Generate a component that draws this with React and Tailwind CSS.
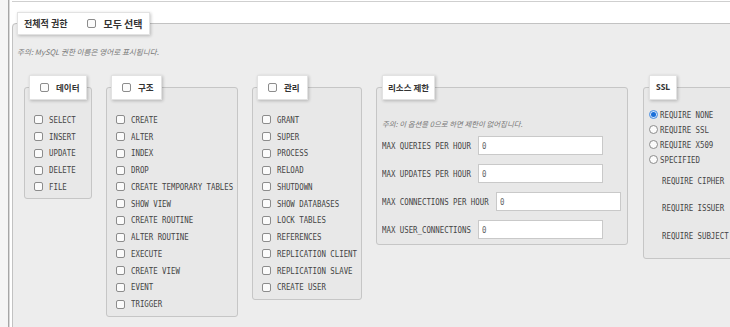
import React from "react";

const dataPrivs = ["SELECT", "INSERT", "UPDATE", "DELETE", "FILE"];
const structPrivs = [
    "CREATE", "ALTER", "INDEX", "DROP", "CREATE TEMPORARY TABLES", "SHOW VIEW",
    "CREATE ROUTINE", "ALTER ROUTINE", "EXECUTE", "CREATE VIEW", "EVENT", "TRIGGER",
];
const adminPrivs = [
    "GRANT", "SUPER", "PROCESS", "RELOAD", "SHUTDOWN", "SHOW DATABASES",
    "LOCK TABLES", "REFERENCES", "REPLICATION CLIENT", "REPLICATION SLAVE", "CREATE USER",
];
const limits = [
    { label: "MAX QUERIES PER HOUR", w: "w-[96px]" },
    { label: "MAX UPDATES PER HOUR", w: "w-[96px]" },
    { label: "MAX CONNECTIONS PER HOUR", w: "w-[114px]" },
    { label: "MAX USER_CONNECTIONS", w: "w-[96px]" },
];

function Box() {
    return <span className="block h-[9px] w-[9px] shrink-0 rounded-[2px] border border-[#8c8c8c] bg-[#fbfbfb]"></span>;
}

function Mono({ children }) {
    return (
        <span className="block origin-left scale-x-[0.82] whitespace-nowrap font-['DejaVu_Sans_Mono',monospace] text-[9px] leading-[10px] text-[#444]">
            {children}
        </span>
    );
}

function Item({ label }) {
    return (
        <div className="flex h-[16.75px] min-w-0 items-center pl-[5px]">
            <Box/>
            <div className="ml-[6px] min-w-0 leading-none"><Mono>{label}</Mono></div>
        </div>
    );
}

function Legend({ children, className = "" }) {
    return (
        <legend className="border border-[#e2e2e2] bg-white shadow-[1px_1px_3px_rgba(0,0,0,0.22)]">
            <div className={`flex h-[23px] items-center whitespace-nowrap font-['Noto_Sans_CJK_KR',sans-serif] text-[8.5px] font-bold leading-none text-[#333] ${className}`}>
                {children}
            </div>
        </legend>
    );
}

function PrivGroup({ title, items, width }) {
    return (
        <fieldset className={`${width} min-w-0 shrink-0 rounded-[3px] border border-[#c6c6c6] bg-[#e8e8e8] px-[4px] pb-[3px]`}>
            <Legend className="pl-[10px] pr-[7px]">
                <Box/>
                <span className="ml-[7px]">{title}</span>
            </Legend>
            <div className="pt-[11.5px]">
                {items.map((p) => <Item key={p} label={p}/>)}
            </div>
        </fieldset>
    );
}

function Radio({ checked }) {
    return checked ? (
        <span className="flex h-[9px] w-[9px] shrink-0 items-center justify-center rounded-full border border-[#4a8fe0] bg-[#cfe2fb]">
            <span className="h-[5px] w-[5px] rounded-full bg-[#1a6fd8]"></span>
        </span>
    ) : (
        <span className="block h-[9px] w-[9px] shrink-0 rounded-full border border-[#8c8c8c] bg-[#fbfbfb]"></span>
    );
}

export default function App() {
    return (
        <div className="flex h-[327px] w-[730px] overflow-hidden bg-white">
            <div className="w-[9px] shrink-0 border-r border-[#a6a6a6] bg-[#f5f5f5]"></div>
            <div className="shrink-0 border-l border-[#d8d8d8] pl-[2px]">
                <div className="mt-[1px] border-t border-[#cfcfcf]"></div>
                <fieldset className="mt-[10px] w-[760px] min-w-0 rounded-[4px] border border-[#c2c2c2] bg-[#ededed] pb-[30px] pl-[4px]">
                    <legend className="border border-[#e2e2e2] bg-white shadow-[1px_1px_3px_rgba(0,0,0,0.22)]">
                        <div className="flex h-[21px] items-center whitespace-nowrap pl-[6px] pr-[6px] font-['Noto_Sans_CJK_KR',sans-serif] font-bold leading-none text-[#333]">
                            <span className="text-[9px]">전체적 권한</span>
                            <span className="ml-[20px]"><Box/></span>
                            <span className="ml-[7px] text-[10px]">모두 선택</span>
                        </div>
                    </legend>
                    <p className="mt-[12px] h-[10px] font-['Noto_Sans_CJK_KR',sans-serif] text-[7.6px] italic leading-[10px] text-[#777]">
                        주의: MySQL 권한 이름은 영어로 표시됩니다.
                    </p>
                    <div className="ml-[7px] mt-[18px] flex items-start gap-[14px]">
                        <PrivGroup title="데이터" items={dataPrivs} width="w-[68px]"/>
                        <PrivGroup title="구조" items={structPrivs} width="w-[132px]"/>
                        <PrivGroup title="관리" items={adminPrivs} width="w-[110px]"/>

                        <fieldset className="w-[252px] min-w-0 shrink-0 rounded-[3px] border border-[#c6c6c6] bg-[#e8e8e8] px-[5px] pb-[5px]">
                            <Legend className="px-[5px]">
                                <span>리소스 제한</span>
                            </Legend>
                            <p className="mt-[19px] h-[10px] whitespace-nowrap font-['Noto_Sans_CJK_KR',sans-serif] text-[7.4px] italic leading-[10px] text-[#777]">
                                주의: 이 옵션을 0으로 하면 제한이 없어집니다.
                            </p>
                            <div className="mt-[7px] flex flex-col gap-[9px]">
                                {limits.map((l) => (
                                    <div key={l.label} className="flex h-[19px] items-center">
                                        <div className={`${l.w} shrink-0`}><Mono>{l.label}</Mono></div>
                                        <div className="flex h-[19px] w-[125px] items-center border border-[#c9c9c9] bg-white pl-[3px]">
                                            <Mono><span className="text-[#666]">0</span></Mono>
                                        </div>
                                    </div>
                                ))}
                            </div>
                        </fieldset>

                        <fieldset className="ml-[1px] w-[100px] min-w-0 shrink-0 rounded-[3px] border border-[#c6c6c6] bg-[#e8e8e8] px-[5px] pb-[8px]">
                            <Legend className="px-[6px]">
                                <span className="font-['Noto_Sans',sans-serif]">SSL</span>
                            </Legend>
                            <div className="pt-[7px]">
                                {["REQUIRE NONE", "REQUIRE SSL", "REQUIRE X509", "SPECIFIED"].map((r, i) => (
                                    <div key={r} className="flex h-[15px] items-center">
                                        <Radio checked={i === 0}/>
                                        <div className="ml-[2px]"><Mono>{r}</Mono></div>
                                    </div>
                                ))}
                                {["REQUIRE CIPHER", "REQUIRE ISSUER", "REQUIRE SUBJECT"].map((r) => (
                                    <div key={r} className="flex h-[27.5px] items-center pl-[13px]">
                                        <Mono>{r}</Mono>
                                    </div>
                                ))}
                            </div>
                        </fieldset>
                    </div>
                </fieldset>
            </div>
        </div>
    );
}
